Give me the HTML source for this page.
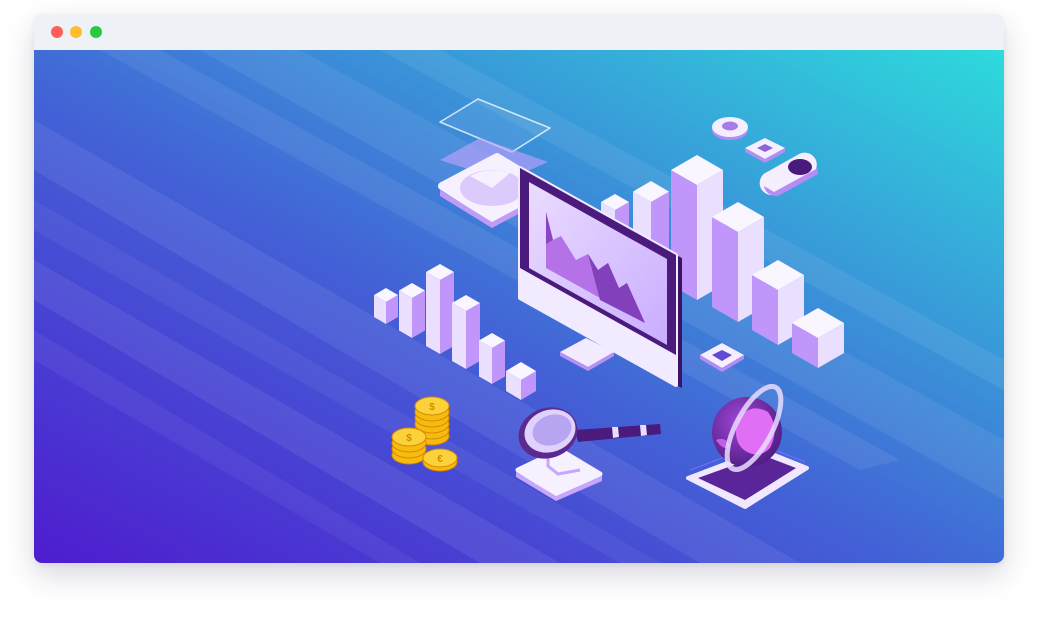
<!DOCTYPE html>
<html><head><meta charset="utf-8"><style>
html,body{margin:0;padding:0;background:#fff;width:1038px;height:618px;overflow:hidden}
.win{position:absolute;left:34px;top:14px;width:970px;height:549px;border-radius:8px;overflow:hidden;box-shadow:0 12px 30px rgba(40,40,80,.18),0 2px 6px rgba(0,0,0,.06)}
.bar{position:absolute;left:0;top:0;width:970px;height:36px;background:#eef1f6}
.d{position:absolute;top:12px;width:12px;height:12px;border-radius:50%}
svg{position:absolute;left:0;top:0}
</style></head><body>
<div class="win"><div class="bar"><div class="d" style="left:17px;background:#fe5f57"></div><div class="d" style="left:36px;background:#febc2e"></div><div class="d" style="left:56px;background:#28c840"></div></div></div>
<svg width="1038" height="618" viewBox="0 0 1038 618">
<defs>
<linearGradient id="bg" x1="0" y1="1" x2="1" y2="0">
<stop offset="0" stop-color="#4e1ccf"/><stop offset="0.45" stop-color="#4361d6"/><stop offset="1" stop-color="#2ddbdc"/></linearGradient>
<clipPath id="c"><path d="M34 50H1004V555a8 8 0 0 1-8 8H42a8 8 0 0 1-8-8Z"/></clipPath>
<linearGradient id="scr" x1="0" y1="0" x2="1" y2="1"><stop offset="0" stop-color="#eadcff"/><stop offset="1" stop-color="#c9adff"/></linearGradient>
<radialGradient id="gl" cx=".4" cy=".35" r=".7"><stop offset="0" stop-color="#a046d8"/><stop offset="1" stop-color="#4e1c80"/></radialGradient>
</defs>
<g clip-path="url(#c)">
<rect x="34" y="50" width="970" height="513" fill="url(#bg)"/>
<g fill="#fff" opacity=".07">
<polygon points="200,50 300,50 1004,440 1004,500"/>
<polygon points="34,120 34,170 700,563 800,563"/>
<polygon points="34,260 34,300 480,563 560,563"/>
<polygon points="380,50 440,50 1004,360 1004,390"/>
<polygon points="100,50 160,50 900,460 860,470"/>
</g>
<g fill="#fff" opacity=".05">
<polygon points="34,200 34,230 620,563 660,563"/>
<polygon points="34,330 34,360 380,563 420,563"/>
</g>
<!-- glass frame & pie panel -->
<path d="M440 122 L478 99 L550 128 L512 152 Z" fill="#fff" fill-opacity=".08" stroke="#fff" stroke-opacity=".75" stroke-width="1.6" stroke-linejoin="round"/>
<path d="M440 160 L480 138 L548 162 L505 181 Z" fill="#c7a3ff" opacity=".6" stroke-linejoin="round"/>
<path d="M442 186 L497 157 L548 188 L492 218 Z" fill="#f6f0ff" stroke="#f6f0ff" stroke-width="8" stroke-linejoin="round"/>
<path d="M440 190 L492 222 L550 191 L550 197 L492 228 L440 196 Z" fill="#c19cf7"/>
<ellipse cx="492" cy="188" rx="32" ry="18" fill="#dccafc"/>
<path d="M492 188 L470 176 A32 18 0 0 1 510 173 Z" fill="#f6f0ff"/>
<!-- right chart -->
<g stroke-linejoin="round">
<polygon points="615,240 601,232 601,202 615,210" fill="#ebdfff"/><polygon points="615,240 629,232 629,202 615,210" fill="#c096fb"/><polygon points="615,210 601,202 615,194 629,202" fill="#faf6ff"/>
<polygon points="651,262 633,251.6 633,191.6 651,202" fill="#ebdfff"/><polygon points="651,262 669,251.6 669,191.6 651,202" fill="#c096fb"/><polygon points="651,202 633,191.6 651,181 669,191.6" fill="#faf6ff"/>
<polygon points="697,300 671,285 671,170 697,185" fill="#c096fb"/><polygon points="697,300 723,285 723,170 697,185" fill="#ebdfff"/><polygon points="697,185 671,170 697,155 723,170" fill="#faf6ff"/>
<polygon points="738,322 712,307 712,217 738,232" fill="#c096fb"/><polygon points="738,322 764,307 764,217 738,232" fill="#ebdfff"/><polygon points="738,232 712,217 738,202 764,217" fill="#faf6ff"/>
<polygon points="778,345 752,330 752,275 778,290" fill="#c096fb"/><polygon points="778,345 804,330 804,275 778,290" fill="#ebdfff"/><polygon points="778,290 752,275 778,260 804,275" fill="#faf6ff"/>
<polygon points="818,368 792,353 792,323 818,338" fill="#c096fb"/><polygon points="818,368 844,353 844,323 818,338" fill="#ebdfff"/><polygon points="818,338 792,323 818,308 844,323" fill="#faf6ff"/>
</g>
<!-- left chart -->
<g>
<polygon points="386,324 374,317 374,295 386,302" fill="#ebdfff"/><polygon points="386,324 398,317 398,295 386,302" fill="#c096fb"/><polygon points="386,302 374,295 386,288 398,295" fill="#faf6ff"/>
<polygon points="412,338 399,330.5 399,290.5 412,298" fill="#ebdfff"/><polygon points="412,338 425,330.5 425,290.5 412,298" fill="#c096fb"/><polygon points="412,298 399,290.5 412,283 425,290.5" fill="#faf6ff"/>
<polygon points="440,354 426,346 426,272 440,280" fill="#ebdfff"/><polygon points="440,354 454,346 454,272 440,280" fill="#c096fb"/><polygon points="440,280 426,272 440,264 454,272" fill="#faf6ff"/>
<polygon points="466,369 452,361 452,303 466,311" fill="#ebdfff"/><polygon points="466,369 480,361 480,303 466,311" fill="#c096fb"/><polygon points="466,311 452,303 466,295 480,303" fill="#faf6ff"/>
<polygon points="492,384 479,376.5 479,340.5 492,348" fill="#ebdfff"/><polygon points="492,384 505,376.5 505,340.5 492,348" fill="#c096fb"/><polygon points="492,348 479,340.5 492,333 505,340.5" fill="#faf6ff"/>
<polygon points="521,400 506,391 506,371 521,380" fill="#ebdfff"/><polygon points="521,400 536,391 536,371 521,380" fill="#c096fb"/><polygon points="521,380 506,371 521,362 536,371" fill="#faf6ff"/>
</g>
<!-- monitor -->
<path d="M560 352 L586 338 L614 352 L588 367 Z" fill="#f3ecff"/>
<path d="M560 352 L588 367 L614 352 L614 356 L588 371 L560 356 Z" fill="#b990f5"/>
<path d="M676 255 L682 258 L682 388 L676 385 Z" fill="#3c1266"/>
<path d="M520 168 L676 255 L676 385 L520 298 Z" fill="#f2eaff" stroke="#f2eaff" stroke-width="4" stroke-linejoin="round"/>
<path d="M520 168 L676 255 L676 355 L520 268 Z" fill="#4b1a7d"/>
<path d="M529 182 L667 259 L667 345 L529 268 Z" fill="url(#scr)"/>
<path d="M546 212 L553 240 L561 236 L576 260 L588 254 L598 270 L608 263 L619 288 L627 283 L645 323 L546 268 Z" fill="#b572e6"/>
<path d="M546 212 L553 240 L546 244 Z" fill="#8a45c0"/>
<path d="M588 254 L598 270 L608 263 L619 288 L627 283 L645 323 L600 300 Z" fill="#8340bb"/>
<!-- top right icons -->
<ellipse cx="730" cy="130" rx="18" ry="10" fill="#b48cf3"/>
<ellipse cx="730" cy="127" rx="18" ry="10" fill="#f4eeff"/>
<ellipse cx="730" cy="126" rx="8" ry="4.5" fill="#a67ce8"/>
<path d="M745 148 L765 138 L785 148 L765 159 Z" fill="#f4eeff"/>
<path d="M745 148 L765 159 L785 148 L785 152 L765 163 L745 152 Z" fill="#b48cf3"/>
<path d="M757 148 L765 144 L773 148 L765 152 Z" fill="#8f63d8"/>
<path d="M772 192 L812 170 A9 9 0 0 0 800 157 L766 176 A9 9 0 0 0 772 192 Z" fill="#f4eeff" stroke="#f4eeff" stroke-width="6" stroke-linejoin="round"/>
<path d="M764 186 Q766 196 778 196 L818 174 L818 168 L774 192 Z" fill="#b48cf3"/>
<ellipse cx="800" cy="167" rx="12" ry="8" fill="#4b1a7d"/>
<path d="M700 355 L722 343 L744 355 L722 368 Z" fill="#f4eeff"/>
<path d="M700 355 L722 368 L744 355 L744 359 L722 372 L700 359 Z" fill="#b48cf3"/>
<path d="M712 355 L722 350 L732 355 L722 361 Z" fill="#5f4ad6"/>
<!-- coins -->
<g stroke="#d68a00" stroke-width="1">
<g fill="#f7bb10">
<ellipse cx="432" cy="436" rx="17" ry="9"/><ellipse cx="432" cy="430" rx="17" ry="9"/><ellipse cx="432" cy="424" rx="17" ry="9"/><ellipse cx="432" cy="418" rx="17" ry="9"/><ellipse cx="432" cy="412" rx="17" ry="9"/><ellipse cx="432" cy="406" rx="17" ry="9" fill="#fcd23a"/>
<ellipse cx="409" cy="455" rx="17" ry="9"/><ellipse cx="409" cy="449" rx="17" ry="9"/><ellipse cx="409" cy="443" rx="17" ry="9"/><ellipse cx="409" cy="437" rx="17" ry="9" fill="#fcd23a"/>
<ellipse cx="440" cy="462" rx="17" ry="9"/><ellipse cx="440" cy="458" rx="17" ry="9" fill="#fcd23a"/>
</g></g>
<g fill="#d68a00" font-family="Liberation Sans,sans-serif" font-size="10" font-weight="bold" text-anchor="middle"><text x="432" y="410">$</text><text x="409" y="441">$</text><text x="440" y="462">€</text></g>
<!-- magnifier -->
<path d="M518 470 L560 450 L600 474 L556 494 Z" fill="#f6f1ff" stroke="#f6f1ff" stroke-width="5" stroke-linejoin="round"/>
<path d="M516 472 L556 496 L602 476 L602 481 L556 501 L516 477 Z" fill="#c7a6fb"/>
<path d="M548 452 L548 466 L558 474 L580 470" fill="none" stroke="#c7a6fb" stroke-width="3"/>
<path d="M575 430 L660 424 L661 434 L578 442 Z" fill="#4b1a7d"/>
<path d="M612 427 L618 427 L619 437 L613 438 Z M640 425 L646 425 L647 435 L641 436 Z" fill="#e9defd"/>
<ellipse cx="548" cy="433" rx="30" ry="25" fill="#5b2a91" transform="rotate(-20 548 433)"/>
<ellipse cx="550" cy="431" rx="26" ry="21" fill="#e0d2fd" transform="rotate(-20 550 431)"/>
<ellipse cx="552" cy="430" rx="20" ry="15" fill="#b7a5f2" transform="rotate(-20 552 430)"/>
<!-- globe -->
<path d="M688 478 L762 450 L807 468 L745 507 Z" fill="#f1e8ff" stroke="#f1e8ff" stroke-width="4" stroke-linejoin="round"/>
<path d="M698 478 L762 455 L796 468 L745 500 Z" fill="#5a2598"/>
<path d="M690 470 L760 444 L805 462" fill="none" stroke="#7b6cff" stroke-width="1"/>
<circle cx="747" cy="432" r="35" fill="url(#gl)"/>
<path d="M738 420 Q750 402 768 412 Q780 428 770 448 Q758 460 744 450 Q732 440 738 420 Z" fill="#e06ff5"/>
<path d="M716 440 Q724 452 730 446 Q726 436 716 440Z" fill="#c55de8"/>
<ellipse cx="754" cy="428" rx="18" ry="46" fill="none" stroke="#e8ddff" stroke-opacity=".85" stroke-width="5" transform="rotate(28 754 428)"/>
</g>
</svg>
</body></html>
